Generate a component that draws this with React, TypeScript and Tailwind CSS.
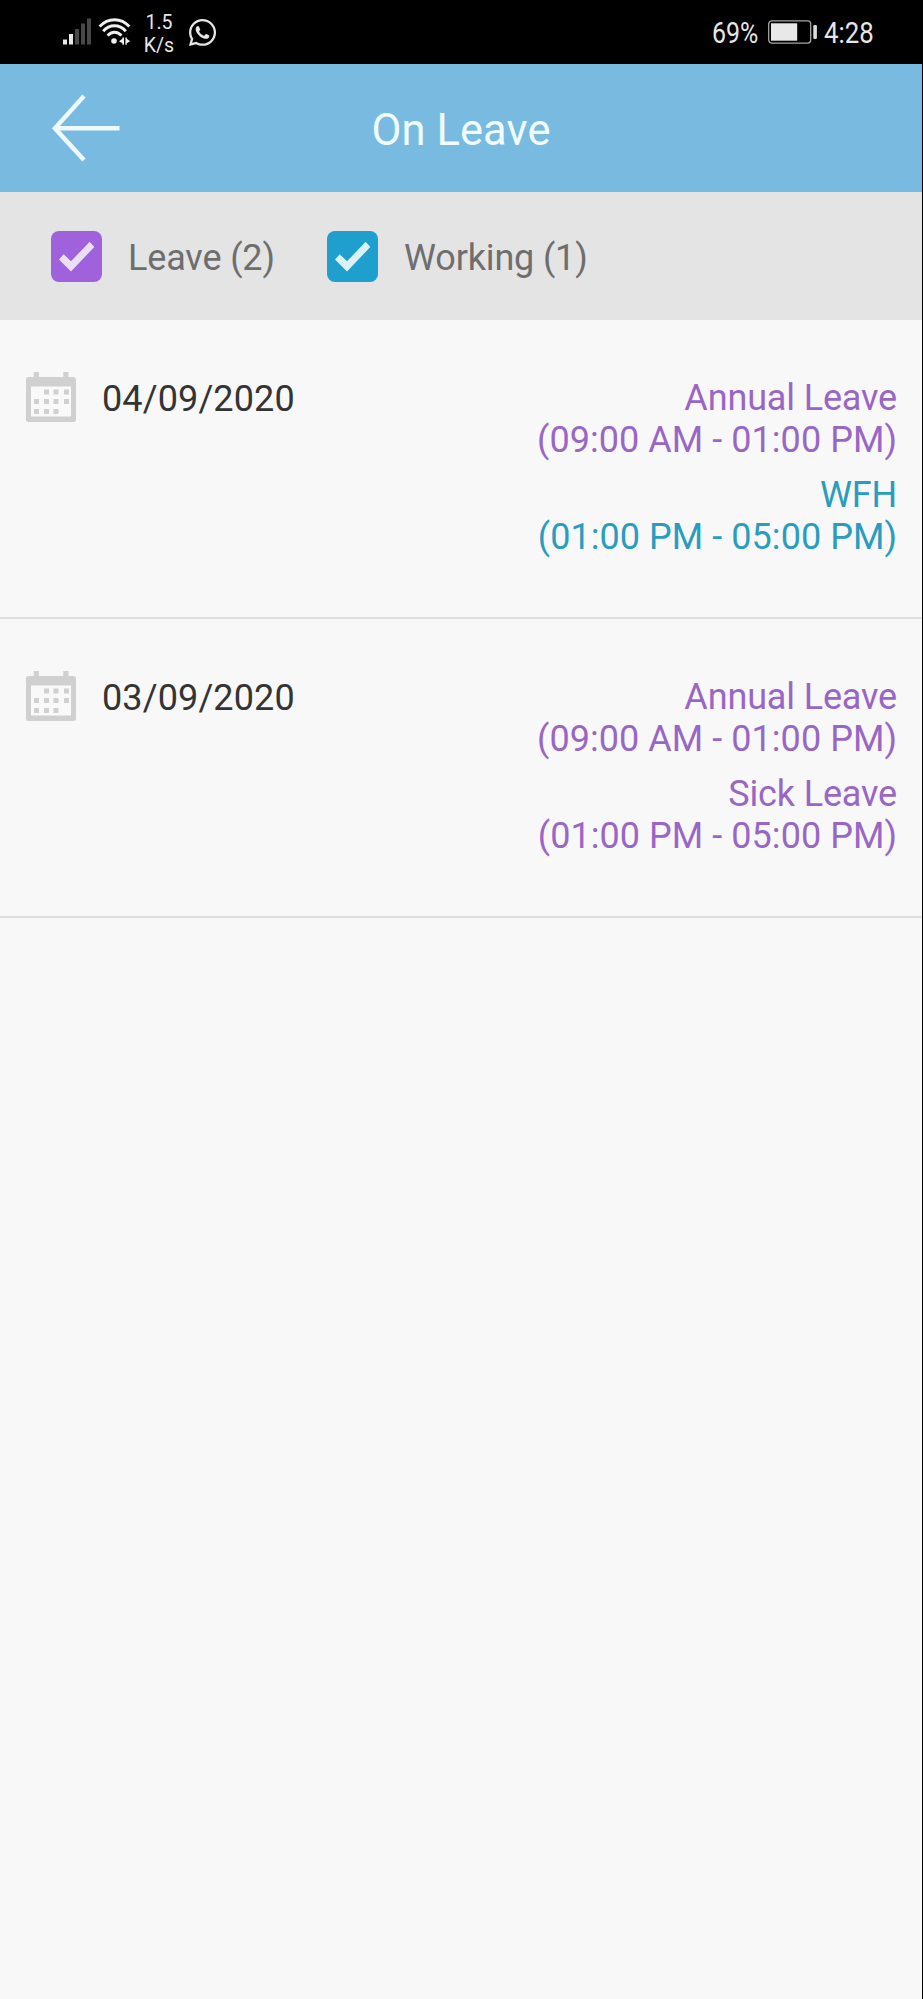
import { FaWhatsapp } from "react-icons/fa";
import clsx from "clsx";

type Slot = { label: string; time: string; kind: "leave" | "working" };

const filters = [
  { label: "Leave (2)", color: "bg-[#9f62dc]", tick: "#ebdff5", width: "w-[276px]" },
  { label: "Working (1)", color: "bg-[#1f9fcd]", tick: "#dcf1f7", width: "w-[300px]" },
];

const days: { date: string; slots: Slot[] }[] = [
  {
    date: "04/09/2020",
    slots: [
      { label: "Annual Leave", time: "(09:00 AM - 01:00 PM)", kind: "leave" },
      { label: "WFH", time: "(01:00 PM - 05:00 PM)", kind: "working" },
    ],
  },
  {
    date: "03/09/2020",
    slots: [
      { label: "Annual Leave", time: "(09:00 AM - 01:00 PM)", kind: "leave" },
      { label: "Sick Leave", time: "(01:00 PM - 05:00 PM)", kind: "leave" },
    ],
  },
];

function SignalIcon() {
  return (
    <svg width="28" height="27" viewBox="0 0 28 27">
      <rect x="0" y="21.5" width="4" height="5" fill="#e8e8e8" />
      <rect x="6" y="16" width="4" height="10.5" fill="#e8e8e8" />
      <rect x="12" y="11" width="4" height="15.5" fill="#484848" />
      <rect x="18" y="5.5" width="4" height="21" fill="#484848" />
      <rect x="24" y="0.5" width="4" height="26" fill="#484848" />
    </svg>
  );
}

function WifiIcon() {
  return (
    <svg width="34" height="27" viewBox="0 0 34 27" fill="none" stroke="#efefef" strokeWidth="2.9">
      <path d="M1.6 8.6C10 -0.6 23 -0.6 31.4 8.6" />
      <path d="M5.2 13.2C11.5 6 21.5 6 27.8 13.2" />
      <path d="M9.6 17.6C13.5 13.2 19.5 13.2 23.4 17.6" />
      <circle cx="16" cy="23" r="2.8" fill="#efefef" stroke="none" />
      <path d="M26 19.5v7.3h-1.6v-1.6l-3.4-2 3.4-2.4v-1.3zM27.4 19.5h1.4v1.3l3.4 2.4-3.4 2v1.6h-1.4z" fill="#efefef" stroke="none" />
    </svg>
  );
}

function BatteryIcon() {
  return (
    <svg width="49" height="24" viewBox="0 0 49 24">
      <rect x="0.7" y="0.9" width="42" height="22.2" rx="3" fill="none" stroke="#a5a5a5" strokeWidth="1.3" />
      <rect x="3" y="3.3" width="26.2" height="17.4" fill="#e8e8e8" />
      <rect x="45.3" y="5" width="3.6" height="14" rx="1.2" fill="#dcdcdc" />
    </svg>
  );
}

function BackIcon() {
  return (
    <svg width="68" height="68" viewBox="0 0 68 68" fill="none" stroke="#edfbff" strokeWidth="4.4">
      <path d="M32 2 2.9 34.3 32 66M3.5 34.3H67.5" />
    </svg>
  );
}

function CalendarIcon() {
  const dots = [
    [18, 17.5], [27.5, 17.5], [38, 17.5],
    [8, 27], [18, 27], [27.5, 27], [38, 27],
    [8, 37], [18, 37], [27.5, 37],
  ];
  return (
    <svg width="50" height="50" viewBox="0 0 50 50" fill="#d0d0d0" className="shrink-0">
      <rect x="7.7" y="0" width="5.2" height="8" />
      <rect x="37.3" y="0" width="5.2" height="8" />
      <rect x="0" y="5" width="50" height="45" rx="2.5" />
      <rect x="5" y="14.5" width="40" height="30" fill="#f9f9f9" />
      {dots.map(([x, y]) => (
        <rect key={`${x}-${y}`} x={x} y={y} width="5" height="5" />
      ))}
    </svg>
  );
}

function StatusBar() {
  return (
    <div className="flex h-16 items-start justify-between bg-black text-[#e6e6e6]">
      <div className="flex items-start pl-[63px]">
        <div className="pt-[18px]">
          <SignalIcon />
        </div>
        <div className="pt-[18px] pl-[7px]">
          <WifiIcon />
        </div>
        <div className="w-[52px] pt-[11px] pl-[2px] text-center text-[19.5px] leading-[23px]">
          <p>1.5</p>
          <p>K/s</p>
        </div>
        <FaWhatsapp className="mt-[17px] ml-[3px] h-[31px] w-[31px]" />
      </div>
      <div className="flex items-start pr-[48px] text-[29px] leading-[34px]">
        <span className="mt-[16px] w-[56px] origin-left scale-x-[0.86]">69%</span>
        <div className="mt-[20px]">
          <BatteryIcon />
        </div>
        <span className="mt-[16px] ml-[7px] w-[50px] origin-left scale-x-[0.89]">4:28</span>
      </div>
    </div>
  );
}

function Header() {
  return (
    <header className="grid h-32 grid-cols-[120px_1fr_120px] items-center bg-[#78bae0]">
      <button className="pl-[52px]" aria-label="Back">
        <BackIcon />
      </button>
      <h1 className="pt-[5px] text-center text-[43.5px] leading-[50px] tracking-[0.1px] text-[#f0fcff]">On Leave</h1>
    </header>
  );
}

export default function App() {
  return (
    <div className="min-h-[1999px] bg-black pr-px font-['Roboto',sans-serif]">
      <div className="flex min-h-[1999px] flex-col bg-[#f8f8f8]">
        <StatusBar />
        <Header />

        <div className="flex h-32 items-center bg-[#e4e4e4] pl-[51px]">
          {filters.map((filter) => (
            <label key={filter.label} className={clsx("flex items-center gap-[26px]", filter.width)}>
              <span className={clsx("h-[51px] w-[51px] shrink-0 rounded-[8px]", filter.color)}>
                <svg width="51" height="51" viewBox="0 0 51 51" fill={filter.tick}>
                  <path d="M8 28.4 12.7 23.2 20 30.2 38.7 10.8 43.3 16 20 40.4z" />
                </svg>
              </span>
              <span className="pt-[3px] text-[36px] leading-[42px] tracking-[-0.15px] whitespace-nowrap text-[#6e6e6e]">
                {filter.label}
              </span>
            </label>
          ))}
        </div>

        {days.map((day) => (
          <section
            key={day.date}
            className="flex h-[299px] items-start justify-between border-b-2 border-[#dedede] pr-[25px] pl-[26px]"
          >
            <div className="flex gap-[26px] pt-[52px]">
              <CalendarIcon />
              <time className="pt-[6px] text-[36px] leading-[42px] tracking-[0.12px] text-[#343434]">{day.date}</time>
            </div>
            <div className="flex flex-col gap-[13px] pt-[57px] text-right text-[36px] leading-[42px]">
              {day.slots.map((slot) => (
                <div key={slot.time} className={slot.kind === "leave" ? "text-[#9867c6]" : "text-[#2a9dbf]"}>
                  <p className="tracking-[-0.15px]">{slot.label}</p>
                  <p className="tracking-[0.05px]">{slot.time}</p>
                </div>
              ))}
            </div>
          </section>
        ))}
      </div>
    </div>
  );
}
